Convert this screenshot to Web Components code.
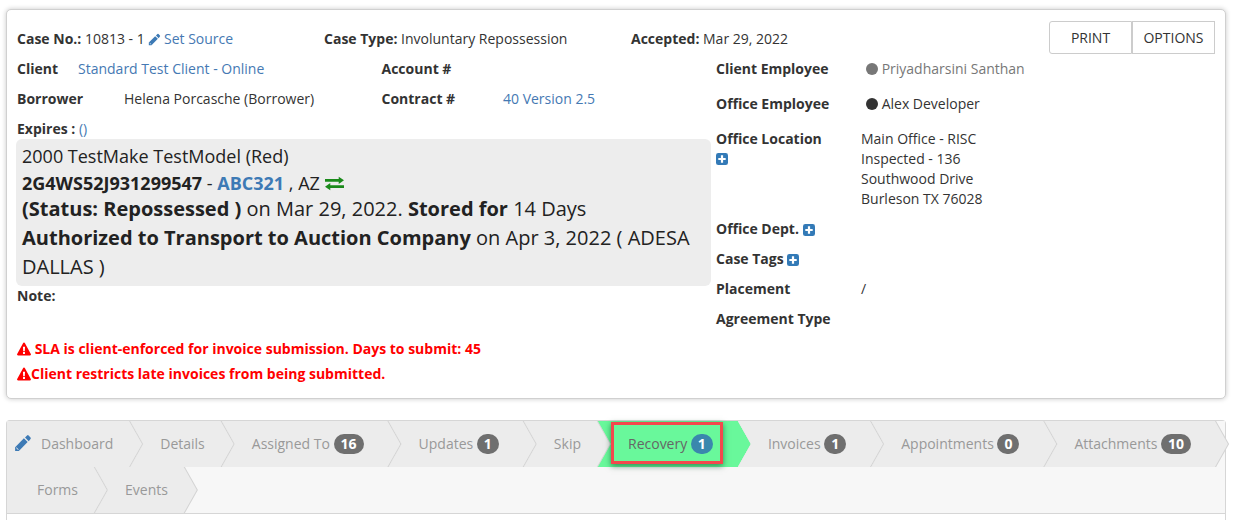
<!DOCTYPE html>
<html lang="en"><head><meta charset="utf-8"><title>Case</title>
<style>
html,body{margin:0;padding:0;height:520px;overflow:hidden;background:#fff}
body{font:14px/20px "Open Sans",sans-serif;color:#333;padding-top:9px;box-sizing:border-box}
a{color:#4579b3;text-decoration:none}
b{font-weight:700}
</style></head><body>
<case-card>
  <case-header slot="header">
    <span><b>Case No.:</b> 10813 - 1 <fa-icon name="pencil" style="--s:13px;color:#3d7ab5;margin-right:-1px"></fa-icon> <a>Set Source</a></span>
    <span><b>Case Type:</b> Involuntary Repossession</span>
    <span><b>Accepted:</b> Mar 29, 2022</span>
    <action-btn slot="actions" style="border-radius:3px 0 0 3px">PRINT</action-btn>
    <action-btn slot="actions">OPTIONS</action-btn>
  </case-header>
  <info-pair slot="left"><info-field style="--w:61px;width:364.500px" label="Client"><a>Standard Test Client - Online</a></info-field><info-field label="Account #"></info-field></info-pair>
  <info-pair slot="left"><info-field style="--w:107px;width:364.500px" label="Borrower">Helena Porcasche (Borrower)</info-field><info-field style="--w:121.500px" label="Contract #"><a>40 Version 2.5</a></info-field></info-pair>
  <expires-line slot="left"><b>Expires :</b> <a>()</a></expires-line>
  <vehicle-box slot="left">
    <div class="l1 first">2000 TestMake TestModel (Red)</div>
    <div class="l1"><b>2G4WS52J931299547</b> - <a style="color:#3d7ab5"><b>ABC321</b></a> , AZ <fa-icon name="exchange" style="--s:19px;color:#1a8a1a;vertical-align:-3px"></fa-icon></div>
    <div class="l2"><b>(Status: Repossessed )</b> on Mar 29, 2022. <b>Stored for</b> 14 Days</div>
    <div class="l3"><b>Authorized to Transport to Auction Company</b> on Apr 3, 2022 ( ADESA DALLAS )</div>
  </vehicle-box>
  <note-line slot="left"><b>Note:</b></note-line>
  <alert-line slot="left"><fa-icon name="warning" style="--s:14px"></fa-icon> SLA is client-enforced for invoice submission. Days to submit: 45</alert-line>
  <alert-line slot="left"><fa-icon name="warning" style="--s:14px"></fa-icon>Client restricts late invoices from being submitted.</alert-line>

  <side-field slot="right" label="Client Employee" class="emp"><status-dot color="#777"></status-dot> <span style="color:#777">Priyadharsini Santhan</span></side-field>
  <side-field slot="right" label="Office Employee" class="emp"><status-dot color="#333"></status-dot> Alex Developer</side-field>
  <side-field slot="right" label="Office Location"><fa-icon slot="extra" name="plus" style="--s:12px;display:block;margin-top:4px"></fa-icon>Main Office - RISC<br>Inspected - 136<br>Southwood Drive<br>Burleson TX 76028</side-field>
  <side-field slot="right" label="Office Dept."><fa-icon slot="inline" name="plus" style="--s:12px"></fa-icon></side-field>
  <side-field slot="right" label="Case Tags"><fa-icon slot="inline" name="plus" style="--s:12px"></fa-icon></side-field>
  <side-field slot="right" label="Placement">/</side-field>
  <side-field slot="right" label="Agreement Type"></side-field>
</case-card>
<step-bar>
  <step-tab first pad="34"><fa-icon slot="lead" name="pencil" style="--s:18px;color:#3d7ab5"></fa-icon>Dashboard</step-tab>
  <step-tab>Details</step-tab>
  <step-tab>Assigned To <count-badge>16</count-badge></step-tab>
  <step-tab>Updates <count-badge>1</count-badge></step-tab>
  <step-tab>Skip</step-tab>
  <step-tab active>Recovery <count-badge color="#3a87ad">1</count-badge></step-tab>
  <step-tab>Invoices <count-badge>1</count-badge></step-tab>
  <step-tab>Appointments <count-badge>0</count-badge></step-tab>
  <step-tab>Attachments <count-badge>10</count-badge></step-tab>
  <step-tab first>Forms</step-tab>
  <step-tab>Events</step-tab>
</step-bar>
<script>
function def(name, css, html, extra){
  const cls = class extends HTMLElement{
    constructor(){super();const r=this.attachShadow({mode:'open'});r.innerHTML='<style>'+css+'</style>'+html;}
    connectedCallback(){ if(extra) extra.call(this,this.shadowRoot); }
  };
  customElements.define(name,cls);
}
const ICONS={
  pencil:['0 0 24 24','<path fill="currentColor" fill-rule="evenodd" d="M1.500 17.500V22.500H6.500L18.200 10.800 13.200 5.800 1.500 17.500zM3.200 17.800L6.200 20.800 5.500 21.200 2.800 18.500zM22 6.600a1.500 1.500 0 0 0 0-2.100L19.500 2a1.500 1.500 0 0 0-2.100 0l-2.700 2.700 5 5L22 6.600z"/>'],
  exchange:['0 0 18 13','<path fill="currentColor" d="M0 2.200h13V0l5 3.500L13 7V4.800H0zM18 8.200H5V6l-5 3.500L5 13v-2.200h13z"/>'],
  warning:['0 0 16 15','<path fill="#f00" d="M8 .2c.5 0 .9.3 1.100.7l6.700 12.300c.4.700-.1 1.600-1 1.600H1.200c-.9 0-1.400-.9-1-1.600L6.900.9C7.100.5 7.500.2 8 .2z"/><path fill="#fff" d="M6.800 4.800h2.400l-.3 5.200H7.100zM6.900 11h2.200v2.200H6.900z"/>'],
  plus:['0 0 13 13','<rect width="13" height="13" rx="2.500" fill="#337ab7"/><path fill="#fff" d="M5.300 2.500h2.400v2.800h2.800v2.400H7.700v2.800H5.300V7.700H2.500V5.300h2.800z"/>']
};
def('fa-icon',':host{display:inline-block;width:var(--s,14px);height:var(--s,14px);vertical-align:-2px;line-height:0}svg{width:100%;height:100%;display:block}','',function(r){
  const i=ICONS[this.getAttribute('name')];
  if(!r.querySelector('svg')) r.innerHTML+='<svg viewBox="'+i[0]+'" aria-hidden="true">'+i[1]+'</svg>';
});
def('status-dot',':host{display:inline-block;width:12px;height:12px;border-radius:50%;vertical-align:-1px;margin-left:5px}','',function(){this.style.background=this.getAttribute('color');});
def('count-badge',':host{display:inline-block;min-width:8px;padding:0 7px;height:20px;line-height:20px;border-radius:10px;background:var(--c,#6f6f6f);color:#fff;font-weight:700;font-size:14px;text-align:center;margin-right:8px}','<slot></slot>',function(){const c=this.getAttribute('color');if(c)this.style.setProperty('--c',c);});
def('action-btn',':host{display:flex;align-items:center;justify-content:center;width:83px;height:33px;box-sizing:border-box;border:1px solid #ccc;background:#fff;color:#333;font-size:14px}','<slot></slot>');
def('case-card',`:host{display:block;margin-left:6px;width:1220px;box-sizing:border-box;background:#fff;border:1px solid #d0d0d0;border-radius:5px;box-shadow:0 0 5px rgba(0,0,0,.22);padding:11px 10px 9px 10px}
.body{display:grid;grid-template-columns:699px 1fr}
.left{display:flex;flex-direction:column}.right{display:flex;flex-direction:column;gap:10px;padding-top:5px}`,
`<slot name="header"></slot><div class="body"><div class="left"><slot name="left"></slot></div><div class="right"><slot name="right"></slot></div></div>`);
def('case-header',`:host{display:flex;height:33px}.info{display:grid;grid-template-columns:307px 307px 1fr;flex:1;padding-top:8px}.act{display:flex}`,
`<div class="info"><slot></slot></div><div class="act"><slot name="actions"></slot></div>`);
def('info-pair',':host{display:flex;height:30px;align-items:center}','<slot></slot>');
def('info-field',':host{display:grid;grid-template-columns:var(--w,auto) 1fr}b{font-weight:700}','<b></b><div><slot></slot></div>',function(r){r.querySelector('b').textContent=this.getAttribute('label');});
def('expires-line',':host{display:block;padding-top:5px;height:20px}','<slot></slot>');
def('vehicle-box',`:host{display:block;margin-left:-1px;width:695px;box-sizing:border-box;background:#ededed;border-radius:6px;padding:5px 6px 5px;color:#222}`,'<slot></slot>');
def('note-line',':host{display:block;margin-bottom:33px}','<slot></slot>');
def('alert-line',':host{display:block;color:#f00;font-weight:700;margin-bottom:5px}','<slot></slot>');
def('side-field',`:host{display:grid;grid-template-columns:145px 1fr}b{font-weight:700}.v{min-width:0}`,
`<div><b></b> <slot name="inline"></slot><slot name="extra"></slot></div><div class="v"><slot></slot></div>`,function(r){r.querySelector('b').textContent=this.getAttribute('label');if(this.classList.contains('emp'))this.style.paddingBottom='5px';});
def('step-bar',`:host{display:block;margin:21px 0 0 6px;width:1220px;box-sizing:border-box;border:1px solid #d6d6d6;border-bottom:0;border-radius:4px 4px 0 0;height:100px;background:#fff}
.t{display:flex;flex-wrap:wrap;background:#f7f7f7;border-bottom:1px solid #d6d6d6;border-radius:3px 0 0 0}`,'<div class="t"><slot></slot></div>');
def('step-tab',`:host{display:flex;align-items:center;height:46px;position:relative;z-index:0;margin-right:-13px;padding:0 30px;color:#999;gap:0;white-space:pre}
.line,.fill{position:absolute;inset:0;z-index:-2;background:#d4d4d4;clip-path:polygon(0 0,calc(100% - 13px) 0,100% 50%,calc(100% - 13px) 100%,0 100%,13px 50%)}
.fill{z-index:-1;background:#ececec;right:1.200px}
:host([first]) .line,:host([first]) .fill{clip-path:polygon(0 0,calc(100% - 13px) 0,100% 50%,calc(100% - 13px) 100%,0 100%)}
:host([active]){color:#666}
:host([active]) .line,:host([active]) .fill{background:#69f89b}
.hl{display:none;position:absolute;left:13px;right:28px;top:1px;bottom:3px;border:3px solid #f4484d;box-shadow:0 2px 6px rgba(0,70,35,.6);box-sizing:border-box;z-index:-1}
:host([active]) .hl{display:block}
.lead{position:absolute;left:7px;top:13px;line-height:0}`,
`<span class="line"></span><span class="fill"></span><span class="hl"></span><span class="lead"><slot name="lead"></slot></span><slot></slot>`,function(){const p=this.getAttribute('pad');if(p)this.style.paddingLeft=p+'px';});
</script>
<style>
vehicle-box .l1{font-size:18px;line-height:26px}
vehicle-box .l1.first{line-height:25px;margin-bottom:1px}
vehicle-box .l2{font-size:20px;line-height:26px;margin-bottom:1px}
vehicle-box .l3{font-size:20px;line-height:29px}
</style>
</body></html>
